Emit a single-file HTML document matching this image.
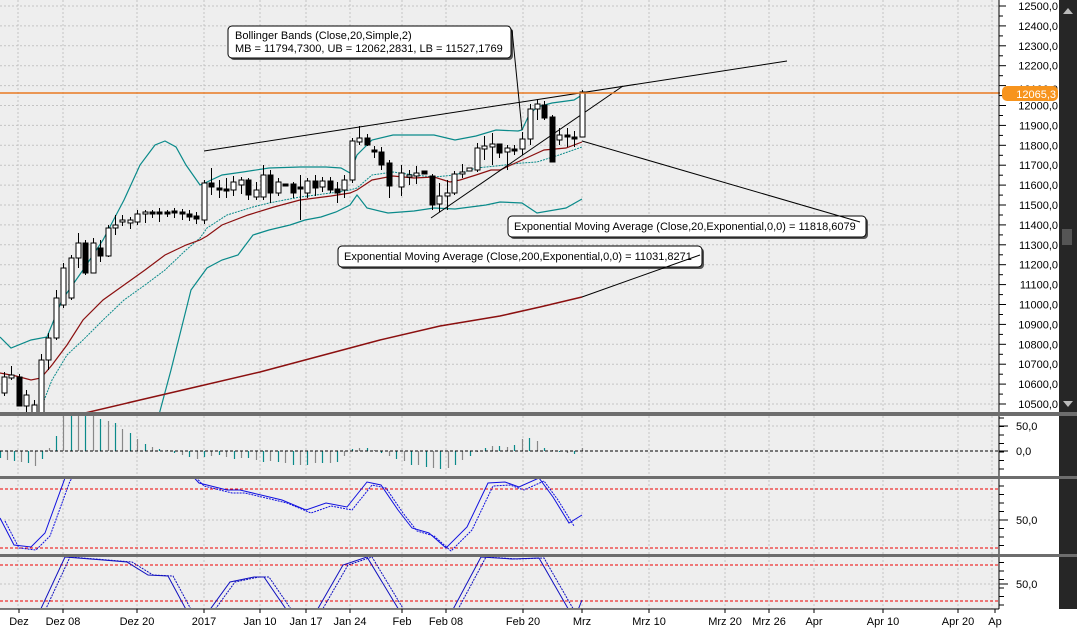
<!DOCTYPE html>
<html><head><meta charset="utf-8"><style>
html,body{margin:0;padding:0;background:#fff;}
svg{display:block;font-family:"Liberation Sans",sans-serif;}
</style></head><body>
<svg id="s" width="1077" height="634" viewBox="0 0 1077 634" xmlns="http://www.w3.org/2000/svg">
<defs>
<clipPath id="cm"><rect x="0" y="0" width="999" height="412"/></clipPath>
<clipPath id="c2"><rect x="0" y="479" width="999" height="75"/></clipPath>
<clipPath id="c3"><rect x="0" y="557" width="999" height="51"/></clipPath>
</defs>
<rect x="0" y="0" width="1077" height="634" fill="#fff"/>
<rect x="0" y="0" width="999" height="609" fill="#eeeeee"/>
<g id="grid" stroke="#c4c4c4" stroke-width="1" stroke-dasharray="2,2"></g>
<rect x="1059" y="0" width="18" height="609" fill="#262626"/>
<polygon points="1063,14 1073,14 1068,8" fill="#bbb"/>
<polygon points="1063,401 1073,401 1068,407" fill="#bbb"/>
<rect x="1062" y="229" width="10" height="16" fill="#555"/>
<g id="main" clip-path="url(#cm)"></g>
<g id="sub"></g>
<g id="p2" clip-path="url(#c2)"></g>
<g id="p3" clip-path="url(#c3)"></g>
<line x1="0" y1="93" x2="1000" y2="93" stroke="#e87820" stroke-width="1.5"/>
<line x1="999" y1="0" x2="999" y2="609" stroke="#000"/>
<g id="ticks" stroke="#000"></g>
<g id="labels" font-size="11" fill="#000" text-anchor="end"></g>
<rect x="1002" y="86" width="56" height="15" rx="5" fill="#f7941d"/>
<text x="1056" y="98" font-size="11" fill="#fff" text-anchor="end">12065,3</text>
<g font-size="11" fill="#000">
<rect x="230" y="28" width="283" height="32" rx="4" fill="#555"/>
<rect x="228" y="26" width="283" height="32" rx="4" fill="#fff" stroke="#000"/>
<text x="235" y="39">Bollinger Bands (Close,20,Simple,2)</text>
<text x="235" y="52">MB = 11794,7300, UB = 12062,2831, LB = 11527,1769</text>
<rect x="510" y="218" width="358" height="21" rx="4" fill="#555"/>
<rect x="508" y="216" width="358" height="21" rx="4" fill="#fff" stroke="#000"/>
<text x="514" y="230">Exponential Moving Average (Close,20,Exponential,0,0) = 11818,6079</text>
<rect x="340" y="248" width="364" height="21" rx="4" fill="#555"/>
<rect x="338" y="246" width="364" height="21" rx="4" fill="#fff" stroke="#000"/>
<text x="344" y="260">Exponential Moving Average (Close,200,Exponential,0,0) = 11031,8271</text>
</g>
<g stroke="#000" stroke-width="1" fill="none">
<line x1="512" y1="30" x2="522" y2="130"/>
<line x1="582" y1="141" x2="860" y2="222"/>
<line x1="582" y1="297" x2="700" y2="255"/>
</g>
<rect x="0" y="412" width="1077" height="4" fill="#6d6d6d"/>
<rect x="0" y="476" width="1077" height="3" fill="#6d6d6d"/>
<rect x="0" y="554" width="1077" height="3" fill="#6d6d6d"/>
<g id="dates" font-size="11" fill="#000" text-anchor="middle"></g>
</svg>
<script>
var NS="http://www.w3.org/2000/svg";
function el(p,t,a){var e=document.createElementNS(NS,t);for(var k in a)e.setAttribute(k,a[k]);document.getElementById(p).appendChild(e);return e;}
function pl(p,pts,a){a.points=pts.map(function(q){return q.join(",")}).join(" ");a.fill="none";return el(p,"polyline",a);}
var gx=[18,63,137,204,260,306,350,402,446,523,582,649,725,769,814,883,958,992];
gx.forEach(function(x){el("grid","line",{x1:x,y1:0,x2:x,y2:609});});
for(var k=0;k<=20;k++){var y=6+k*19.9;el("grid","line",{x1:0,y1:y,x2:999,y2:y});}
el("grid","line",{x1:0,y1:426,x2:999,y2:426});
el("grid","line",{x1:0,y1:520,x2:999,y2:520});
el("grid","line",{x1:0,y1:584,x2:999,y2:584});
for(var k=0;k<=20;k++){var y=6+k*19.9;var v=12500-k*100;
 el("ticks","line",{x1:999,y1:y,x2:1006,y2:y});
 el("ticks","line",{x1:999,y1:y+10,x2:1003,y2:y+10});
 if(v!=12100){var t=el("labels","text",{x:1058,y:y+4});t.textContent=v+",0";}}
var t=el("labels","text",{x:1058,y:93});t.textContent="12100,0";
[[426,"50,0"],[451,"0,0"],[520,"50,0"],[584,"50,0"]].forEach(function(a){
 el("ticks","line",{x1:999,y1:a[0],x2:1008,y2:a[0]});
 var t=el("labels","text",{x:1016,y:a[0]+4,"text-anchor":"start"});t.textContent=a[1];});
for(var y=418;y<608;y+=8.5){if((y>474&&y<481)||(y>552&&y<559))continue;el("ticks","line",{x1:999,y1:y,x2:1004,y2:y});}
var dl=[[19,"Dez"],[63,"Dez 08"],[137,"Dez 20"],[204,"2017"],[260,"Jan 10"],[306,"Jan 17"],[350,"Jan 24"],[402,"Feb"],[446,"Feb 08"],[523,"Feb 20"],[582,"Mrz"],[649,"Mrz 10"],[725,"Mrz 20"],[769,"Mrz 26"],[814,"Apr"],[883,"Apr 10"],[958,"Apr 20"],[995,"Ap"]];
dl.forEach(function(d){el("dates","line",{x1:d[0],y1:609,x2:d[0],y2:613,stroke:"#000"});var t=el("dates","text",{x:d[0],y:625});t.textContent=d[1];});
el("dates","line",{x1:0,y1:609,x2:999,y2:609,stroke:"#000"});
var teal="#0a8a8a",red="#8b1010";
var ub=[[0,337],[11,348],[31,340],[47,337],[62,300],[83,270],[103,240],[124,200],[140,165],[155,145],[165,141],[176,147],[186,165],[200,185],[207,182],[222,175],[243,172],[269,168],[300,167],[326,167],[341,168],[350,173],[357,155],[372,140],[393,135],[434,135],[455,140],[476,136],[496,130],[518,131],[522,130],[529,115],[537,107],[552,103],[574,100],[582,95]];
var lb=[[155,430],[160,411],[171,370],[181,330],[191,290],[207,268],[222,260],[238,255],[253,235],[269,230],[290,225],[305,220],[321,217],[336,212],[350,205],[357,195],[367,208],[388,213],[414,211],[434,208],[455,209],[486,205],[500,202],[522,203],[537,213],[566,208],[582,199]];
var mb=[[36,420],[41,408],[52,380],[67,355],[83,340],[103,320],[124,300],[145,285],[165,270],[186,250],[200,238],[207,228],[227,215],[253,207],[269,203],[300,197],[331,193],[350,190],[357,188],[372,175],[393,172],[414,175],[434,177],[455,175],[476,168],[496,166],[522,163],[537,162],[559,155],[582,147]];
var e20=[[0,373],[16,376],[31,380],[41,378],[52,365],[67,345],[83,320],[103,300],[124,285],[145,270],[165,255],[186,245],[200,240],[207,236],[222,225],[248,215],[274,207],[300,200],[331,196],[350,193],[357,190],[372,180],[393,176],[414,178],[434,177],[450,182],[460,180],[476,175],[491,170],[500,170],[522,160],[544,150],[566,148],[582,142]];
var e200=[[85,413],[140,400],[200,386],[260,372],[320,356],[380,340],[440,326],[500,316],[540,307],[582,297]];
pl("main",ub,{stroke:teal,"stroke-width":1.2});
pl("main",lb,{stroke:teal,"stroke-width":1.2});
pl("main",mb,{stroke:teal,"stroke-width":1,"stroke-dasharray":"2,1"});
pl("main",e20,{stroke:red,"stroke-width":1.2});
pl("main",e200,{stroke:red,"stroke-width":1.5});
el("main","line",{x1:204,y1:151,x2:787,y2:61,stroke:"#000"});
el("main","line",{x1:431,y1:218,x2:623,y2:86,stroke:"#000"});
var c=[[377,393,0,372,396],[375,378,0,366,380],[377,406,1,374,406],[395,406,0,390,418],[405,418,0,400,418],[360,418,0,354,418],[338,360,0,333,370],[298,338,0,290,340],[268,305,0,263,308],[258,298,0,255,300],[243,258,0,233,268],[243,273,1,240,275],[243,273,0,238,273],[248,256,1,240,262],[228,256,0,225,257],[225,228,0,215,235],[220,222,0,215,226],[220,223,0,217,229],[214,222,0,210,225],[212,214,0,210,223],[212,214,1,210,218],[212,214,1,208,222],[212,214,1,210,217],[211,213,1,208,218],[212,214,1,209,220],[214,217,1,210,221],[216,219,1,212,224],[183,220,0,180,224],[183,187,1,168,195],[188,190,1,180,198],[189,191,1,178,198],[182,190,0,176,196],[180,185,0,177,194],[180,195,1,178,200],[190,197,0,182,200],[175,197,0,165,200],[175,193,1,170,203],[182,193,0,178,196],[184,186,1,184,186],[184,193,1,182,198],[187,189,1,175,220],[181,193,0,178,198],[181,188,1,175,196],[181,187,0,177,192],[181,190,1,177,193],[189,193,1,182,203],[180,190,0,175,198],[141,180,0,138,183],[138,142,0,126,145],[138,145,1,134,146],[150,152,1,146,158],[152,165,1,147,170],[163,186,1,160,198]];
var cs=[];c.forEach(function(d,i){cs.push([4+7.4*i].concat(d));});
var c2=[[401,173,187,0,165,196],[409,175,177,0,170,185],[416,173,176,0,166,184],[424,171,174,1,171,174],[432,176,205,1,174,210],[439,196,204,0,183,212],[447,193,196,0,180,210],[454,174,193,0,171,195],[462,172,174,0,164,178],[469,168,171,0,168,171],[477,148,170,0,143,172],[484,146,149,0,136,160],[492,144,147,0,133,165],[499,144,153,1,144,158],[507,148,152,0,145,170],[514,149,151,1,145,155],[522,139,149,0,132,155],[530,109,139,0,104,145],[537,104,109,0,99,120],[544,105,118,1,101,120],[552,117,162,1,115,162],[559,135,140,0,128,145],[567,135,137,1,128,147],[574,137,139,1,131,147],[582,92,137,0,90,137]];
cs=cs.concat(c2);
cs.forEach(function(d){var x=Math.round(d[0])+0.5;
 el("main","line",{x1:x,y1:d[4],x2:x,y2:d[5],stroke:"#000"});
 var h=Math.max(d[2]-d[1],1.5);
 el("main","rect",{x:x-2.5,y:d[1],width:5,height:h,fill:d[3]?"#000":"#fff",stroke:"#000","stroke-width":1});});
var hv=[[0,-7],[7,-9],[14,-10],[21,-11],[28,-12],[35,-15],[42,-8],[49,3],[56,15],[63,35],[71,35],[78,35],[85,35],[93,35],[100,32],[108,30],[115,28],[122,22],[130,18],[137,12],[145,7],[152,4],[159,2],[167,1],[174,-2],[182,-4],[189,-6],[197,-8],[204,-6],[211,-5],[219,-4],[226,-6],[234,-8],[241,-7],[248,-7],[256,-9],[263,-11],[270,-10],[278,-11],[285,-12],[293,-14],[300,-14],[307,-14],[315,-12],[322,-12],[330,-12],[337,-11],[344,-5],[352,2],[359,3],[367,3],[374,1],[381,-2],[389,-5],[396,-8],[404,-10],[411,-14],[418,-14],[426,-16],[433,-17],[440,-18],[448,-17],[455,-14],[462,-9],[470,-5],[477,-1],[485,3],[492,5],[499,5],[507,4],[514,6],[522,12],[529,13],[537,10],[544,3],[552,1],[559,-1],[567,-2],[574,-3],[582,3]];
hv.forEach(function(d,i){el("sub","line",{x1:d[0]+0.5,y1:451,x2:d[0]+0.5,y2:Math.max(416,451-d[1]),stroke:i%2?"#888":teal,"stroke-width":1.2});});
el("sub","line",{x1:0,y1:451,x2:999,y2:451,stroke:"#000","stroke-dasharray":"3,2"});
[489,548,565,601].forEach(function(y){el("sub","line",{x1:0,y1:y,x2:999,y2:y,stroke:"#e00","stroke-dasharray":"3,2"});});
var s2=[[0,518],[14,545],[31,547],[45,533],[65,478],[75,465],[89,470],[100,472],[110,468],[150,462],[185,468],[199,483],[227,490],[240,490],[261,495],[282,500],[306,510],[326,503],[347,507],[367,482],[381,485],[398,510],[412,528],[429,533],[446,548],[467,527],[488,483],[505,482],[519,487],[539,478],[553,497],[569,523],[582,515]];
var s3=[[0,625],[38,615],[65,557],[103,560],[127,562],[148,575],[168,576],[189,615],[197,625],[206,615],[230,582],[254,577],[264,577],[288,612],[300,625],[316,612],[343,565],[367,557],[402,615],[425,625],[450,615],[481,557],[512,559],[539,558],[570,612],[576,615],[582,600]];
function shift(pts,dx,dy){return pts.map(function(q){return [q[0]+dx,q[1]+dy];});}
pl("p2",s2,{stroke:"#1010e0","stroke-width":1});
pl("p2",shift(s2,5,3).slice(0,-1),{stroke:"#1010e0","stroke-width":1,"stroke-dasharray":"2,1"});
pl("p3",s3,{stroke:"#1010c0","stroke-width":1});
pl("p3",shift(s3,5,0).slice(0,-1),{stroke:"#1010c0","stroke-width":1,"stroke-dasharray":"2,1"});
</script>
</body></html>
